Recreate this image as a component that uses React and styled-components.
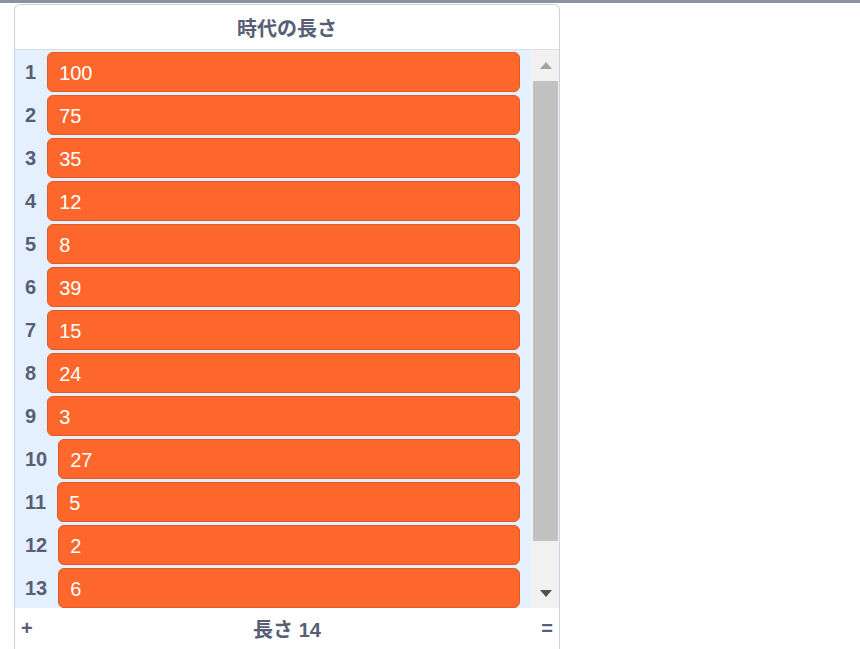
import React from 'react';
import styled, {createGlobalStyle} from "styled-components";

// only the rows that fit in the monitor are shown; the list holds 14
const items = [100, 75, 35, 12, 8, 39, 15, 24, 3, 27, 5, 2, 6];

function App() {
    return (
        <>
            <GlobalStyle/>
            <TopRule/>
            <Monitor>
                <Header>時代の長さ</Header>
                <Body>
                    <List>
                        {items.map((value, i) => (
                            <Row key={i}>
                                <Index>{i + 1}</Index>
                                <Item>{value}</Item>
                            </Row>
                        ))}
                    </List>
                    <Scrollbar>
                        <ArrowButton>
                            <Arrow up/>
                        </ArrowButton>
                        <Thumb/>
                        <Track/>
                        <ArrowButton>
                            <Arrow/>
                        </ArrowButton>
                    </Scrollbar>
                </Body>
                <Footer>
                    <FooterButton>+</FooterButton>
                    <Length>長さ 14</Length>
                    <FooterButton>=</FooterButton>
                </Footer>
            </Monitor>
        </>
    );
}

export default App;

const GlobalStyle = createGlobalStyle`
  html, body {
    margin: 0;
    padding: 0;
    overflow: hidden;
    background: #ffffff;
  }
  body {
    font-family: "Liberation Sans", "Noto Sans CJK JP", sans-serif;
  }
`;

const TopRule = styled.div`
  height: 3px;
  background: #8b92a4;
`;

const Monitor = styled.div`
  margin: 1px 0 0 14px;
  width: 546px;
  box-sizing: border-box;
  border: 1px solid #c9d3e1;
  border-bottom: none;
  border-radius: 6px 6px 0 0;
  overflow: hidden;
  background: #ffffff;
`;

const Header = styled.div`
  height: 44px;
  display: flex;
  align-items: center;
  justify-content: center;
  border-bottom: 1px solid #dcdfe5;
  font-family: "Liberation Sans", "Noto Sans CJK JP", sans-serif;
  font-weight: bold;
  font-size: 20px;
  color: #575e75;
`;

const Body = styled.div`
  display: flex;
  height: 558px;
  background: #e5f0ff;
`;

const List = styled.div`
  flex: 1;
  overflow: hidden;
  padding: 2px 10px 0 10px;
`;

const Row = styled.div`
  display: flex;
  align-items: center;
  height: 40px;
  margin-bottom: 3px;
`;

const Index = styled.span`
  margin-right: 11px;
  font-weight: bold;
  font-size: 20px;
  color: #575e75;
`;

const Item = styled.div`
  flex: 1;
  height: 40px;
  box-sizing: border-box;
  display: flex;
  align-items: center;
  padding: 3px 0 0 11px;
  background: #fd672c;
  border: 1px solid #de5a27;
  border-radius: 6px;
  color: #ffffff;
  font-size: 20px;
`;

const Scrollbar = styled.div`
  width: 29px;
  display: flex;
  flex-direction: column;
  background: #f1f1f1;
`;

const ArrowButton = styled.div`
  height: 30px;
  display: flex;
  align-items: center;
  justify-content: center;
  padding-left: 2px;
`;

const Arrow = styled.div`
  width: 0;
  height: 0;
  border-left: 6px solid transparent;
  border-right: 6px solid transparent;
  border-bottom: ${props => props.up ? '7px solid #a3a3a3' : 'none'};
  border-top: ${props => props.up ? 'none' : '7px solid #505050'};
`;

const Thumb = styled.div`
  height: 460px;
  margin: 1px 1px 0 3px;
  background: #c1c1c1;
`;

const Track = styled.div`
  flex: 1;
`;

const Footer = styled.div`
  height: 41px;
  display: flex;
  align-items: center;
  justify-content: space-between;
  padding: 0 6px 0 6px;
  font-weight: bold;
  color: #575e75;
`;

const FooterButton = styled.span`
  font-size: 20px;
`;

const Length = styled.span`
  font-family: "Liberation Sans", "Noto Sans CJK JP", sans-serif;
  font-size: 20px;
`;
